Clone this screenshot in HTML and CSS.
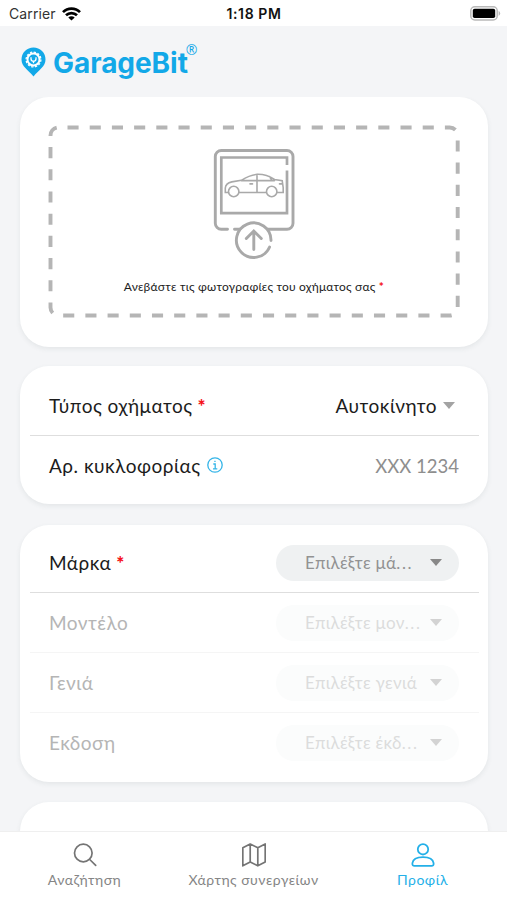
FILE: index.html
```html
<!DOCTYPE html>
<html lang="el">
<head>
<meta charset="utf-8">
<meta name="viewport" content="width=device-width, initial-scale=1">
<title>GarageBit</title>
<link rel="stylesheet" href="styles.css">
</head>
<body>
<div class="app">
  <header class="status">
    <div class="carrier">Carrier
      <svg class="wifi" width="19" height="14" viewBox="0 0 19 14" fill="none" stroke="#000" stroke-width="2.7"><path d="M1 5.1a12 12 0 0 1 17 0M4 8.3a7.8 7.8 0 0 1 11 0"/><path d="M9.5 13.6 6.3 10.5a4.6 4.6 0 0 1 6.4 0z" fill="#000" stroke="none"/></svg>
    </div>
    <div class="clock">1:18 PM</div>
    <svg class="battery" width="31" height="15" viewBox="0 0 31 15"><rect x=".8" y=".8" width="26.4" height="13.2" rx="4" fill="#fff" stroke="#b9b9b9" stroke-width="1.5"/><rect x="2.8" y="2.7" width="22.4" height="9.4" rx="1.8"/><path d="M28.6 4.8q3.2 2.6 0 5.2z" fill="#b9b9b9"/></svg>
  </header>

  <div class="brand">
    <svg width="25" height="30" viewBox="0 0 25 30"><path d="M12.5.5A12 12 0 0 0 .5 12.6C.5 19.5 7 23 12.5 29.4 18 23 24.5 19.5 24.5 12.6A12 12 0 0 0 12.5.5z" fill="#12a8e8"/><circle cx="12.5" cy="12.5" r="6" fill="none" stroke="#fff" stroke-width="2"/><circle cx="12.5" cy="12.5" r="7.400" fill="none" stroke="#fff" stroke-width="1.300" stroke-dasharray="2.300 1.575"/><path d="M10 10.200v1.500a2.500 2.500 0 0 0 5 0v-1.500M12.500 14.200v2" fill="none" stroke="#fff" stroke-width="1.300"/></svg>
    <span class="wordmark">GarageBit</span><span class="reg">®</span>
  </div>

  <main>
    <section class="card upload">
      <svg class="frame" width="412" height="193" viewBox="0 0 412 193" fill="none"><path d="M19.5 2.5H401.7a8 8 0 0 1 8 8V182.5a8 8 0 0 1-8 8H10.5a8 8 0 0 1-8-8V10.5a8 8 0 0 1 8-8z" stroke="#b5b5b5" stroke-width="3.9" stroke-dasharray="11.1 11.1"/></svg>
      <svg class="photo" width="84" height="112" viewBox="0 0 84 112" fill="none" stroke="#a9a9a9" stroke-width="2.900" stroke-linecap="round">
        <path d="M15.500 81.200H9.300a6 6 0 0 1-6-6V8.500a6 6 0 0 1 6-6H75a6 6 0 0 1 6 6V75.200a6 6 0 0 1-6 6H56M22.500 81.200h5.500"/>
        <path d="M75 17V9.500H9.300V65.200H75V22.500" stroke-linecap="butt" stroke-width="2.700"/>
        <path d="M59 92.500A17.300 17.300 0 1 0 57.600 99"/>
        <path d="M41.800 101.500V83.500M34.300 90.500 41.800 83l7.500 7.500"/>
        <g stroke-width="1.600"><path d="M16.500 44.500H13.300V40c.3-4 3-5.300 6.500-6.100l9.500-1.600C36 28 40 26.400 46 26.300c7 0 11 1.500 16.500 5.200l7.700 1.200 1 7v4.800h-6M27.200 44.500H54.200M29.300 32.600H62.500M45 26.400v18.100M57.500 28.500l2.500 4M38 35.900h2.500M67.500 35.900h3"/><circle cx="21.700" cy="43.500" r="5.200"/><circle cx="59.700" cy="43.500" r="5.200"/></g>
      </svg>
      <p class="caption">Ανεβάστε τις φωτογραφίες του οχήματος σας <b>*</b></p>
    </section>

    <section class="card vehicle">
      <div class="row line"><span class="label">Τύπος οχήματος <b>*</b></span><span class="value">Αυτοκίνητο<i class="arrow"></i></span></div>
      <div class="row"><span class="label">Αρ. κυκλοφορίας <svg class="info" width="16" height="16" viewBox="0 0 16 16" fill="none" stroke="#35b5e8" stroke-width="1.300"><circle cx="8" cy="8" r="7.200"/><path d="M6.300 7h1.900v4.800M6 11.900h4.300M7.300 4.400h1.300"/></svg></span><span class="plate">XXX 1234</span></div>
    </section>

    <section class="card model">
      <div class="row line"><span class="label">Μάρκα <b>*</b></span><div class="select"><span>Επιλέξτε μά<span class="dots">...</span></span><i class="arrow"></i></div></div>
      <div class="row line off"><span class="label">Μοντέλο</span><div class="select"><span>Επιλέξτε μον<span class="dots">...</span></span><i class="arrow"></i></div></div>
      <div class="row line off"><span class="label">Γενιά</span><div class="select"><span>Επιλέξτε γενιά</span><i class="arrow"></i></div></div>
      <div class="row off"><span class="label">Εκδοση</span><div class="select"><span>Επιλέξτε έκδ<span class="dots">...</span></span><i class="arrow"></i></div></div>
    </section>

    <section class="card next"></section>
  </main>

  <nav class="tabs">
    <div class="tab"><svg width="24" height="24" viewBox="0 0 24 24" fill="none" stroke="#747474" stroke-width="1.700" stroke-linecap="round"><circle cx="10.300" cy="10" r="8.800"/><path d="m16.700 16.500 6 5.800"/></svg><span>Αναζήτηση</span></div>
    <div class="tab"><svg width="24" height="24" viewBox="0 0 24 24" fill="none" stroke="#747474" stroke-width="1.700" stroke-linejoin="round"><path d="M.8 4.800 8.200 1l7.600 3.800L23.200 1v18L15.800 22.800 8.200 19 .8 22.800zM8.200 1v18M15.800 4.800v18"/></svg><span>Χάρτης συνεργείων</span></div>
    <div class="tab active"><svg width="24" height="24" viewBox="0 0 24 24" fill="none" stroke="#24b0e8" stroke-width="1.800" stroke-linejoin="round"><circle cx="12" cy="6.300" r="5.200"/><path d="M1.400 20.200C1.900 16.500 6 14.200 12 14.200s10.100 2.300 10.600 6c.2 1.600-.5 2.700-2 2.700H3.400c-1.500 0-2.200-1.100-2-2.700z"/></svg><span>Προφίλ</span></div>
  </nav>
</div>
</body>
</html>
```
FILE: styles.css
```css
* { box-sizing: border-box; }
body {
  margin: 0;
  background: #f4f5f7;
  font-family: Lato, "Noto Sans", sans-serif;
  color: #1c1c1c;
}
.app {
  height: 900px;
  display: flex;
  flex-direction: column;
  overflow: hidden;
}
.status {
  flex: none;
  height: 26px;
  padding: 0 6px 0 9px;
  background: #fff;
  display: grid;
  grid-template-columns: 1fr auto 1fr;
  align-items: center;
  font: 14px/26px Inter, sans-serif;
}
.carrier { display: flex; align-items: center; gap: 6px; letter-spacing: .1px; color: #333; }
.wifi { margin-top: 1px; }
.clock { font-weight: 600; letter-spacing: .6px; color: #111; margin-right: 2px; padding-top: 1px; }
.battery { justify-self: end; margin-top: -1px; }
.brand {
  flex: none;
  height: 71px;
  padding: 0 0 0 21px;
  display: flex;
  align-items: center;
  color: #12a8e8;
}
.wordmark { margin: 2px 0 0 7px; font: bold 28px/34px Inter, sans-serif; letter-spacing: -.05px; }
.reg { align-self: flex-start; margin: 15px 0 0 -2px; font: 14px/18px "Open Sans", sans-serif; }
main { flex: 1; min-height: 0; padding: 0 19px 0 20px; overflow: hidden; }
.card {
  background: #fff;
  border-radius: 29px;
  box-shadow: 0 2px 5px rgba(70, 85, 90, .09);
}
.upload {
  height: 250px;
  margin-bottom: 19px;
  display: grid;
  justify-items: center;
  grid-template-rows: 180px 1fr;
}
.frame { grid-area: 1 / 1 / 3 / 2; justify-self: start; margin: 28px 0 0 28px; }
.photo { grid-area: 1 / 1; margin-top: 51px; }
.caption { grid-area: 2 / 1; margin: 0; font-size: 12px; line-height: 20px; letter-spacing: .2px; }
b { color: #f5131b; font-weight: 900; }
.vehicle { height: 138px; margin-bottom: 21px; padding: 10px 9px 0 10px; }
.row {
  height: 60px;
  padding: 0 20px 0 19px;
  display: flex;
  align-items: center;
  justify-content: space-between;
  border-bottom: 1.500px solid transparent;
}
.line { border-bottom-color: #dedede; }
.label { font-size: 19px; letter-spacing: .5px; display: flex; gap: 5px; align-items: center; }
.info { margin: -2px 0 0 1px; }
.value { font-size: 19px; letter-spacing: .5px; display: flex; align-items: center; gap: 6px; padding-right: 4px; }
.plate { font-size: 18.500px; color: #8e8e8e; }
.arrow {
  width: 12px;
  height: 7px;
  background: #a3a3a3;
  clip-path: polygon(0 0, 100% 0, 50% 100%);
}
.model { height: 257px; margin-bottom: 20px; padding: 8px 9px 0 10px; }
.select {
  width: 183px;
  height: 36px;
  border-radius: 18px;
  background: #eff1f2;
  padding: 0 17px 0 29px;
  display: flex;
  align-items: center;
  justify-content: space-between;
  font-size: 17px;
  letter-spacing: .3px;
  color: #929292;
}
.dots { letter-spacing: 1.600px; }
.select .arrow { background: #888; }
.off.row { border-bottom-color: #f5f5f5; }
.off.row:last-child { border-bottom-color: transparent; }
.off .label { color: #b5b5b5; }
.off .select { background: #fbfcfc; color: #dcdcdc; }
.off .select .arrow { background: #d3d3d3; }
.next { height: 90px; }
.tabs {
  flex: none;
  height: 69px;
  background: #fff;
  border-top: 1px solid #efefef;
  display: grid;
  grid-template-columns: repeat(3, 1fr);
}
.tab {
  display: flex;
  flex-direction: column;
  align-items: center;
  padding-top: 11px;
  gap: 3px;
  font-size: 14px;
  line-height: 20px;
  letter-spacing: .5px;
  color: #858585;
}
.active { color: #24b0e8; }
```
